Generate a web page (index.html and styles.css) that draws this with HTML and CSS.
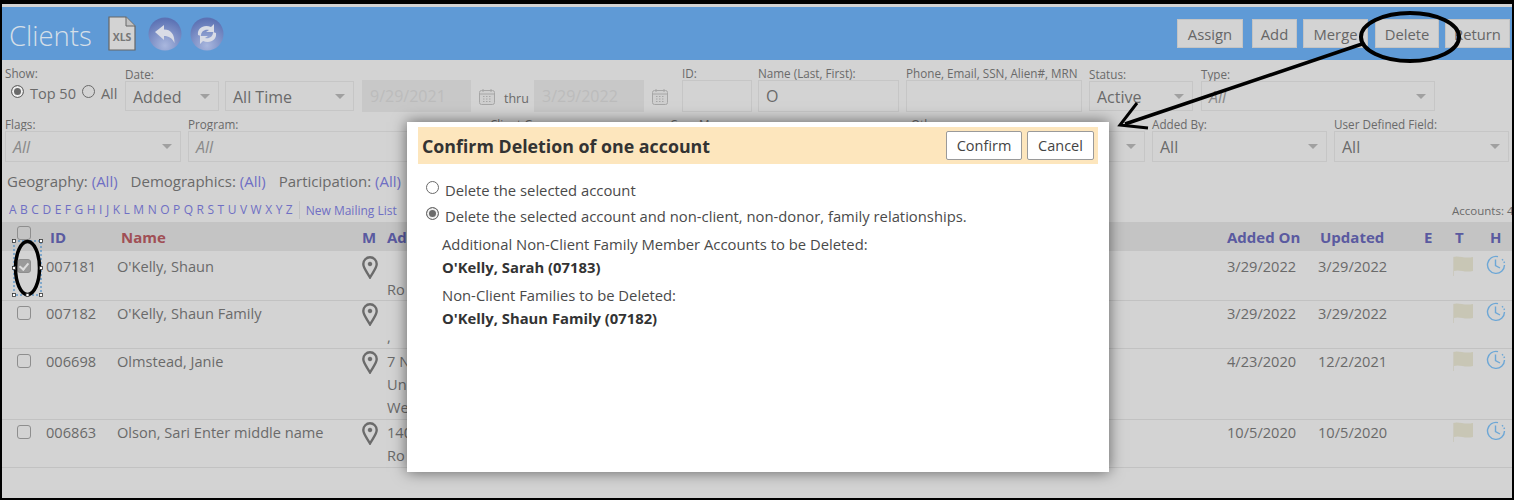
FILE: index.html
```html
<!DOCTYPE html>
<html lang="en">
<head>
    <meta charset="UTF-8">
    <title>Clients</title>
    <link rel="stylesheet" href="styles.css">
</head>
<body>
    <div class="frame">
        <!-- Header -->
        <div class="header">
            <h1 class="title-text">Clients</h1>
            <svg class="xls-icon" width="28" height="35" viewBox="0 0 28 35">
                <path d="M1 1H18L27 10V34H1Z" fill="#d3d3d3" stroke="#666" stroke-width="1.2"/>
                <path d="M18 1V10H27" fill="#c2c2c2" stroke="#666" stroke-width="1"/>
                <text x="14" y="25" class="xls-text">XLS</text>
            </svg>
            <svg class="round-icon" width="34" height="34" viewBox="0 0 34 34">
                <defs>
                    <radialGradient id="ball" cx="0.5" cy="0.85" r="0.8">
                        <stop offset="0" stop-color="#a9b7de"/>
                        <stop offset="1" stop-color="#5c72b4"/>
                    </radialGradient>
                </defs>
                <circle cx="17" cy="17" r="16.5" fill="url(#ball)"/>
                <path d="M7 15L16 8V12.5C23 12.5 26.500 17 26.500 26C24 21 21 19 16 19V23Z" fill="#d9dce6"/>
            </svg>
            <svg class="round-icon" width="34" height="34" viewBox="0 0 34 34">
                <circle cx="17" cy="17" r="16.5" fill="url(#ball)"/>
                <path d="M8 18C7 11 14 7 21 10L24 7V15H16L19 13C15 12 11 14 11 19Z" fill="#d9dce6"/>
                <path d="M26 16C27 23 20 27 13 24L10 27V19H18L15 21C19 22 23 20 23 15Z" fill="#d9dce6"/>
            </svg>
            <div class="header-btns">
                <button class="head-btn btn-assign">Assign</button>
                <button class="head-btn btn-add">Add</button>
                <button class="head-btn btn-merge">Merge</button>
                <button class="head-btn btn-delete">Delete</button>
                <button class="head-btn btn-return">Return</button>
            </div>
        </div>

        <!-- Filters -->
        <div class="filter-row row-one">
            <div class="field f-show">
                <label>Show:</label>
                <div class="show-opts">
                    <span class="radio on"></span><span class="opt-text">Top 50</span><span class="radio"></span><span class="opt-text">All</span>
                </div>
            </div>
            <div class="field f-date">
                <label>Date:</label>
                <div class="select">Added</div>
            </div>
            <div class="field f-range"><div class="select">All Time</div></div>
            <div class="field f-from"><div class="input disabled">9/29/2021</div></div>
            <svg class="cal-icon" width="18" height="18" viewBox="0 0 18 18">
                <g id="cal" fill="#cfcfcf" stroke="#a6a6a6">
                    <rect x="1.500" y="2.500" width="15" height="14" rx="2"/>
                    <path d="M1.500 6H16.500M5 1V4M13 1V4"/>
                    <path d="M5 8.500H13M5 11H13M5 13.500H13" stroke-dasharray="1.500 1.500"/>
                </g>
            </svg>
            <span class="thru">thru</span>
            <div class="field f-to"><div class="input disabled">3/29/2022</div></div>
            <svg class="cal-icon" width="18" height="18" viewBox="0 0 18 18"><use href="#cal"/></svg>
            <div class="field f-id"><label>ID:</label><div class="input"></div></div>
            <div class="field f-name"><label>Name (Last, First):</label><div class="input">O</div></div>
            <div class="field f-phone"><label>Phone, Email, SSN, Alien#, MRN</label><div class="input"></div></div>
            <div class="field f-status"><label>Status:</label><div class="select">Active</div></div>
            <div class="field f-type"><label>Type:</label><div class="select italic">All</div></div>
        </div>

        <div class="filter-row row-two">
            <div class="field f-flags"><label>Flags:</label><div class="select italic">All</div></div>
            <div class="field f-program"><label>Program:</label><div class="select italic">All</div></div>
            <div class="field f-group"><label>Client Group:</label><div class="select"></div></div>
            <div class="field f-search"><label>Case Mgr:</label><div class="select"></div></div>
            <div class="field f-other"><label>Other:</label><div class="select"></div></div>
            <div class="field f-added"><label>Added By:</label><div class="select">All</div></div>
            <div class="field f-udf"><label>User Defined Field:</label><div class="select">All</div></div>
        </div>

        <div class="summary-row">
            <span>Geography: <a>(All)</a></span>
            <span>Demographics: <a>(All)</a></span>
            <span>Participation: <a>(All)</a></span>
        </div>

        <div class="alpha-row">
            <div class="alpha">
                <a>A</a><a>B</a><a>C</a><a>D</a><a>E</a><a>F</a><a>G</a><a>H</a><a>I</a><a>J</a><a>K</a><a>L</a><a>M</a><a>N</a><a>O</a><a>P</a><a>Q</a><a>R</a><a>S</a><a>T</a><a>U</a><a>V</a><a>W</a><a>X</a><a>Y</a><a>Z</a>
            </div>
            <a class="mailing">New Mailing List</a>
            <span class="accounts">Accounts: 4</span>
        </div>

        <!-- Table -->
        <div class="client-table">
            <div class="t-row t-head">
                <div><span class="check"></span></div>
                <div class="head-id">ID</div>
                <div class="head-name">Name</div>
                <div>M</div>
                <div>Ad</div>
                <div>Added On</div>
                <div class="head-updated">Updated</div>
                <div>E</div>
                <div>T</div>
                <div>H</div>
            </div>

            <div class="t-row row-a">
                <div><span class="check on"></span></div>
                <div>007181</div>
                <div>O'Kelly, Shaun</div>
                <div><svg class="pin" width="16" height="23" viewBox="0 0 16 23"><use href="#pin"/></svg></div>
                <div class="addr"><br>Ro</div>
                <div>3/29/2022</div>
                <div>3/29/2022</div>
                <div></div>
                <div><svg class="flag" width="22" height="20" viewBox="0 0 22 20"><use href="#flag"/></svg></div>
                <div><svg class="clock" width="20" height="20" viewBox="0 0 20 20"><use href="#clock"/></svg></div>
            </div>

            <div class="t-row row-b">
                <div><span class="check"></span></div>
                <div>007182</div>
                <div>O'Kelly, Shaun Family</div>
                <div><svg class="pin" width="16" height="23" viewBox="0 0 16 23">
                    <g id="pin" fill="none" stroke="#6b6b6b" stroke-width="2.400">
                        <path d="M8 21.500C5 16 1.300 12 1.300 8A6.700 6.700 0 0 1 14.700 8C14.700 12 11 16 8 21.500Z"/>
                        <circle cx="8" cy="8" r="1.800" fill="#6b6b6b" stroke-width="1"/>
                    </g>
                </svg></div>
                <div class="addr"><br>,</div>
                <div>3/29/2022</div>
                <div>3/29/2022</div>
                <div></div>
                <div><svg class="flag" width="22" height="20" viewBox="0 0 22 20">
                    <g id="flag">
                        <path d="M1 1C7 -1 12 3 21 1V15C12 17 8 13 2 15Z" fill="#c8c6b5"/>
                        <path d="M1.500 1V20" stroke="#cbc9bf" stroke-width="1"/>
                    </g>
                </svg></div>
                <div><svg class="clock" width="20" height="20" viewBox="0 0 20 20">
                    <g id="clock" fill="none" stroke="#6da7d6" stroke-width="1.400">
                        <path d="M12 1.600A8.500 8.500 0 1 0 18.500 10"/>
                        <path d="M18.500 8A8.500 8.500 0 0 0 15 3.500" stroke-dasharray="1.500 1.500"/>
                        <path d="M9.500 4.500V10.500L14 13"/>
                    </g>
                </svg></div>
            </div>

            <div class="t-row row-c">
                <div><span class="check"></span></div>
                <div>006698</div>
                <div>Olmstead, Janie</div>
                <div><svg class="pin" width="16" height="23" viewBox="0 0 16 23"><use href="#pin"/></svg></div>
                <div class="addr">7 N<br>Un<br>We</div>
                <div>4/23/2020</div>
                <div>12/2/2021</div>
                <div></div>
                <div><svg class="flag" width="22" height="20" viewBox="0 0 22 20"><use href="#flag"/></svg></div>
                <div><svg class="clock" width="20" height="20" viewBox="0 0 20 20"><use href="#clock"/></svg></div>
            </div>

            <div class="t-row row-d">
                <div><span class="check"></span></div>
                <div>006863</div>
                <div>Olson, Sari Enter middle name</div>
                <div><svg class="pin" width="16" height="23" viewBox="0 0 16 23"><use href="#pin"/></svg></div>
                <div class="addr">140<br>Ro</div>
                <div>10/5/2020</div>
                <div>10/5/2020</div>
                <div></div>
                <div><svg class="flag" width="22" height="20" viewBox="0 0 22 20"><use href="#flag"/></svg></div>
                <div><svg class="clock" width="20" height="20" viewBox="0 0 20 20"><use href="#clock"/></svg></div>
            </div>
        </div>

        <!-- Delete dialog -->
        <div class="modal">
            <div class="modal-title">
                <h2>Confirm Deletion of one account</h2>
                <button class="modal-btn btn-confirm">Confirm</button>
                <button class="modal-btn">Cancel</button>
            </div>
            <div class="modal-opt"><span class="radio"></span>Delete the selected account</div>
            <div class="modal-opt"><span class="radio on"></span>Delete the selected account and non-client, non-donor, family relationships.</div>
            <div class="modal-list">
                <p>Additional Non-Client Family Member Accounts to be Deleted:</p>
                <p class="strong">O'Kelly, Sarah (07183)</p>
                <p class="list-gap">Non-Client Families to be Deleted:</p>
                <p class="strong">O'Kelly, Shaun Family (07182)</p>
            </div>
        </div>

        <!-- Hand drawn markup on the screenshot -->
        <svg class="markup" width="1514" height="500" viewBox="0 0 1514 500">
            <ellipse cx="1410" cy="37" rx="49" ry="24" fill="none" stroke="#000" stroke-width="4"/>
            <path d="M1362 44L1125 124" stroke="#000" stroke-width="3.500" fill="none"/>
            <path d="M1137 103L1120 125L1148 128" stroke="#000" stroke-width="3" fill="none"/>
            <rect x="14" y="241" width="27" height="54" fill="none" stroke="#2f7fc4" stroke-width="1" stroke-dasharray="2 2"/>
            <ellipse cx="27.500" cy="268" rx="12" ry="26.500" fill="none" stroke="#000" stroke-width="3.500"/>
            <g fill="#fff" stroke="#333" stroke-width="0.800">
                <rect x="12.500" y="239.500" width="3" height="3"/>
                <rect x="39.500" y="239.500" width="3" height="3"/>
                <rect x="12.500" y="293.500" width="3" height="3"/>
                <rect x="26" y="293.500" width="3" height="3"/>
                <rect x="39.500" y="293.500" width="3" height="3"/>
                <rect x="12.500" y="266.500" width="3" height="3"/>
                <rect x="39.500" y="266.500" width="3" height="3"/>
            </g>
        </svg>
    </div>
</body>
</html>
```

FILE: styles.css
```css
/* Global Styles */
body, html {
    margin: 0;
    padding: 0;
    height: 100%;
    overflow: hidden;
    font-family: 'Open Sans', 'Noto Sans', sans-serif;
    color: #6a6a6a;
}

.frame {
    position: relative;
    box-sizing: border-box;
    width: 1514px;
    height: 500px;
    overflow: hidden;
    background-color: #d3d3d3;
    border: 2px solid #000;
    border-top-width: 4px;
    padding-top: 3px;
}

/* Header */
.header {
    height: 53px;
    background-color: #5f9ad6;
    display: flex;
    align-items: center;
    padding-left: 7px;
}

.title-text {
    margin: 3px 16px 0 0;
    font-size: 27.500px;
    font-weight: 300;
    color: #d5dfe8;
}

.xls-icon {
    margin-right: 12px;
}

.xls-text {
    font-size: 10.500px;
    font-weight: 700;
    fill: #777;
    text-anchor: middle;
}

.round-icon {
    margin-right: 8px;
}

.header-btns {
    margin-left: auto;
    display: flex;
    padding-right: 2px;
}

.head-btn {
    box-sizing: border-box;
    height: 29px;
    margin-left: 6px;
    border: 1px solid #c4c4c4;
    background-color: #d3d3d3;
    color: #666;
    font-family: inherit;
    font-size: 14.800px;
    padding: 0;
}

.btn-assign { width: 66px; }
.btn-add { width: 45px; margin-left: 9px; }
.btn-merge { width: 65px; }
.btn-delete { width: 64px; margin-left: 7px; }
.btn-return { width: 65px; }

/* Filters */
.filter-row {
    display: flex;
    padding-left: 3px;
    font-size: 11.700px;
    box-sizing: border-box;
}

.row-one {
    height: 52px;
    align-items: flex-end;
}

.row-two {
    height: 51px;
    padding-top: 5px;
    gap: 7px;
}

.field {
    display: flex;
    flex-direction: column;
    flex-shrink: 0;
}

.field label {
    height: 14px;
    line-height: 14px;
    white-space: nowrap;
}

.f-show { width: 120px; }
.f-date { width: 94px; margin-bottom: 1px; }
.f-range { width: 129px; margin: 0 8px 1px 6px; }
.f-from { width: 109px; }
.cal-icon { margin: 0 0 6px 7px; flex-shrink: 0; }
.thru { width: 23px; margin: 0 7px 3px 8px; font-size: 12.500px; line-height: 20px; }
.f-to { width: 110px; }
.f-id { width: 70px; margin-left: 13px; }
.f-name { width: 141px; margin-left: 6px; }
.f-phone { width: 176px; margin-left: 7px; }
.f-status { width: 104px; margin: 0 0 1px 7px; }
.f-type { width: 234px; margin: 0 0 1px 8px; }

.f-flags { width: 176px; }
.f-program { width: 295px; }
.f-group { width: 173px; }
.f-search { width: 234px; }
.f-other { width: 234px; }
.f-added { width: 175px; }
.f-udf { width: 175px; }

.show-opts {
    font-size: 14.500px;
    height: 32px;
    line-height: 28px;
    padding-left: 6px;
    white-space: nowrap;
}

.opt-text {
    margin: 0 6px 0 6px;
}

.select, .input {
    box-sizing: border-box;
    height: 30px;
    line-height: 30px;
    border: 1px solid #c6c6c6;
    padding-left: 7px;
    font-size: 16px;
    white-space: nowrap;
}

.row-two .select {
    height: 31px;
    line-height: 31px;
}

.select {
    position: relative;
}

.select::after {
    content: "";
    position: absolute;
    right: 8px;
    top: 12px;
    border-left: 5px solid transparent;
    border-right: 5px solid transparent;
    border-top: 5px solid #a0a0a0;
}

.italic {
    font-style: italic;
    color: #8a8a8a;
}

.input {
    height: 32px;
}

.input.disabled {
    background-color: #c8c8c8;
    border-color: #c8c8c8;
    color: #bcbcbc;
}

.radio {
    display: inline-block;
    box-sizing: border-box;
    width: 13px;
    height: 13px;
    border: 1px solid #6a6a6a;
    border-radius: 50%;
    vertical-align: 1px;
}

.radio.on {
    background-color: #6a6a6a;
    box-shadow: inset 0 0 0 2px #f0f0f0;
}

/* Geography etc. */
.summary-row {
    display: flex;
    gap: 13px;
    padding: 7px 0 0 5px;
    height: 23px;
    font-size: 15px;
    line-height: 22px;
}

.summary-row a, .alpha a, .mailing {
    color: #6f6fc4;
}

.alpha-row {
    display: flex;
    align-items: center;
    box-sizing: border-box;
    height: 29px;
    padding: 5px 0 0 7px;
    font-size: 12px;
}

.alpha {
    display: flex;
    gap: 3.500px;
    padding-right: 6px;
    margin-right: 6px;
    border-right: 1px solid #c2c2c2;
    height: 18px;
    line-height: 18px;
}

.accounts {
    margin-left: auto;
    font-size: 11.500px;
    white-space: nowrap;
    width: 60px;
}

/* Table */
.client-table {
    font-size: 14.600px;
}

.t-row {
    display: grid;
    grid-template-columns: 44px 71px 245px 25px 840px 91px 106px 31px 35px 22px;
    border-bottom: 1px solid #c2c2c2;
    box-sizing: border-box;
    padding-top: 1px;
    line-height: 23px;
}

.t-head {
    height: 29px;
    padding-top: 0;
    background-color: #c4c4c4;
    border-bottom: none;
    color: #5a5aa0;
    font-weight: 700;
    font-size: 15px;
    line-height: 31px;
}

.t-head .head-id { padding-left: 4px; }
.t-head .head-name { color: #a04f55; padding-left: 4px; }
.t-head .head-updated { padding-left: 2px; }

.t-row > div:first-child {
    padding-left: 15px;
}

.row-a { height: 50px; padding-top: 4px; }
.row-b { height: 48px; }
.row-c { height: 71px; }
.row-d { height: 48px; }

.check {
    display: block;
    box-sizing: border-box;
    width: 14px;
    height: 14px;
    margin-top: 4px;
    border: 1px solid #8e8e8e;
    border-radius: 3px;
}

.check.on {
    background-color: #9a9a9a;
    position: relative;
}

.check.on::after {
    content: "";
    position: absolute;
    left: 3px;
    top: 1px;
    width: 4px;
    height: 7px;
    border: solid #ddd;
    border-width: 0 2px 2px 0;
    transform: rotate(40deg);
}

.pin, .flag, .clock {
    display: block;
    margin-top: 1px;
}

.flag { margin-left: -3px; }
.clock { margin-left: -4px; margin-top: 0; }

/* Modal */
.modal {
    position: absolute;
    left: 405px;
    top: 118px;
    width: 702px;
    height: 350px;
    box-sizing: border-box;
    padding: 5px 11px;
    background-color: #fff;
    box-shadow: 0 0 14px rgba(0, 0, 0, 0.55);
    color: #4a4a4a;
    font-size: 14.800px;
}

.modal-title {
    display: flex;
    align-items: center;
    gap: 5px;
    height: 37px;
    padding: 0 4px;
    margin-bottom: 14px;
    background-color: #fde6bd;
}

.modal-title h2 {
    margin: 0 auto 0 0;
    font-size: 17.800px;
    font-weight: 700;
    color: #333;
}

.modal-btn {
    box-sizing: border-box;
    height: 29px;
    width: 67px;
    background-color: #fff;
    border: 1px solid #9a9a9a;
    border-radius: 2px;
    color: #444;
    font-family: inherit;
    font-size: 14.500px;
    padding: 0;
}

.btn-confirm { width: 76px; }

.modal-opt {
    height: 26px;
    line-height: 24px;
    padding-left: 8px;
}

.modal-opt .radio {
    margin-right: 6px;
    vertical-align: 2px;
}

.modal-list {
    padding: 3px 0 0 24px;
}

.modal-list p {
    margin: 0;
    line-height: 23px;
}

.modal-list .strong {
    font-weight: 700;
    color: #333;
}

.modal-list .list-gap {
    margin-top: 5px;
}

/* Markup */
.markup {
    position: absolute;
    left: -2px;
    top: -4px;
    pointer-events: none;
}
```
